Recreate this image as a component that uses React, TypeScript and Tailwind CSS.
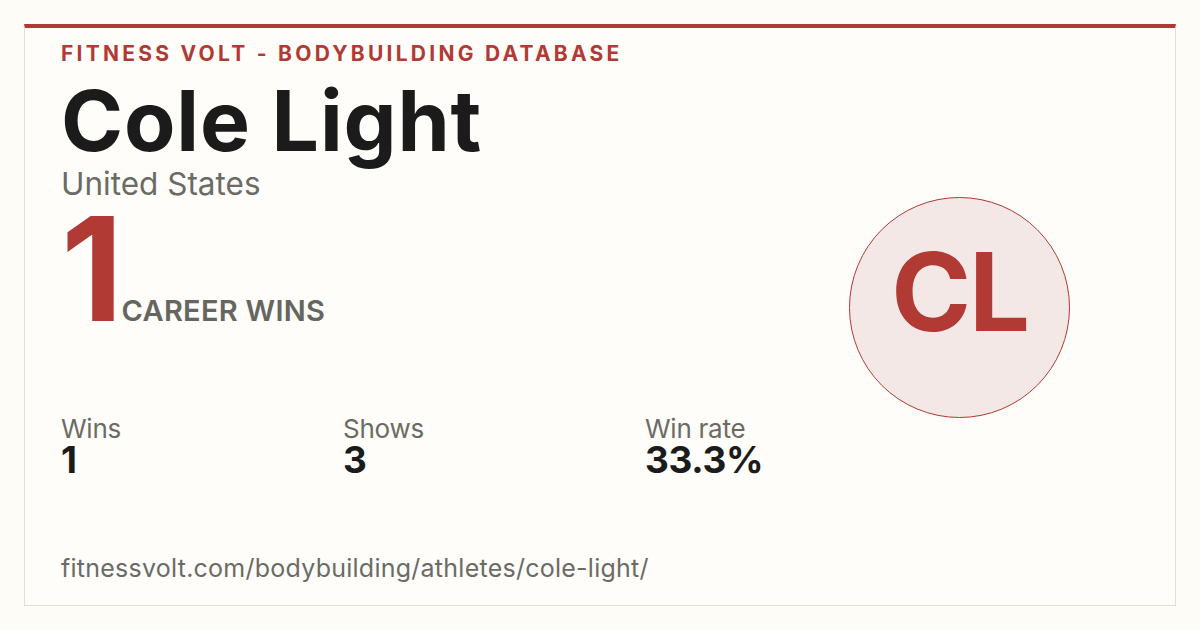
const stats = [
  { label: "Wins", value: "1", w: "w-[282px]" },
  { label: "Shows", value: "3", w: "w-[302px]" },
  { label: "Win rate", value: "33.3%", w: "" },
]

export default function App() {
  return (
    <div className="w-[1200px] h-[630px] bg-[#fdfcf7] p-6 font-['Inter',sans-serif]">
      <div className="h-[582px] border border-[#e2dfd7] border-t-4 border-t-[#b13a35] bg-[#fefdf9] flex pl-9 pr-[105px]">
        <div className="flex-1 flex flex-col pt-[11px] pb-[22px]">
          <div className="text-[21px] leading-[30px] font-bold tracking-[0.155em] text-[#b13a35]">
            FITNESS VOLT - BODYBUILDING DATABASE
          </div>
          <h1 className="mt-[7px] text-[84px] leading-[90px] font-bold tracking-[0.01em] text-[#1b1b1b]">
            Cole Light
          </h1>
          <div className="text-[31.5px] leading-[36px] text-[#6b6b66]">United States</div>
          <div className="flex items-end mt-[14px]">
            <span className="text-[144px] leading-[105px] font-bold text-[#b13a35] tracking-[-0.08em]">1</span>
            <span className="ml-[10px] text-[29px] leading-[21px] font-semibold text-[#666660] tracking-[0.01em]">
              CAREER WINS
            </span>
          </div>
          <div className="flex mt-[93px]">
            {stats.map((s) => (
              <div key={s.label} className={s.w}>
                <div className="text-[26px] leading-[30px] text-[#6b6b66] tracking-[-0.01em]">{s.label}</div>
                <div className="text-[37px] leading-[32px] font-bold text-[#1b1b1b] tracking-[-0.01em]">{s.value}</div>
              </div>
            ))}
          </div>
          <div className="mt-auto text-[25px] leading-[30px] text-[#6b6b66] tracking-[0.01em]">
            fitnessvolt.com/bodybuilding/athletes/cole-light/
          </div>
        </div>
        <div className="flex items-start pt-[169px]">
          <div className="w-[221px] h-[221px] rounded-full border border-[#b13a35] bg-[#f4e8e7] flex items-center justify-center">
            <span className="mb-[32px] text-[108px] leading-none font-bold text-[#b13a35] tracking-[-0.02em]">CL</span>
          </div>
        </div>
      </div>
    </div>
  )
}
